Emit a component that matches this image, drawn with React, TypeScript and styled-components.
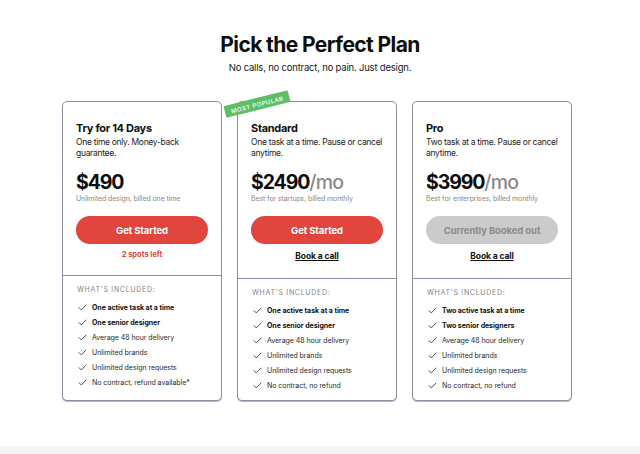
import { createGlobalStyle, styled } from "styled-components";

type Feature = { text: string; bold?: boolean };

type Plan = {
  title: string;
  desc: string;
  price: string;
  perMonth: boolean;
  note: string;
  cta: string;
  disabled: boolean;
  extra: "spots" | "call";
  extraText: string;
  popular: boolean;
  features: Feature[];
};

const plans: Plan[] = [
  {
    title: "Try for 14 Days",
    desc: "One time only. Money-back guarantee.",
    price: "$490",
    perMonth: false,
    note: "Unlimited design, billed one time",
    cta: "Get Started",
    disabled: false,
    extra: "spots",
    extraText: "2 spots left",
    popular: false,
    features: [
      { text: "One active task at a time", bold: true },
      { text: "One senior designer", bold: true },
      { text: "Average 48 hour delivery" },
      { text: "Unlimited brands" },
      { text: "Unlimited design requests" },
      { text: "No contract, refund available*" },
    ],
  },
  {
    title: "Standard",
    desc: "One task at a time. Pause or cancel anytime.",
    price: "$2490",
    perMonth: true,
    note: "Best for startups, billed monthly",
    cta: "Get Started",
    disabled: false,
    extra: "call",
    extraText: "Book a call",
    popular: true,
    features: [
      { text: "One active task at a time", bold: true },
      { text: "One senior designer", bold: true },
      { text: "Average 48 hour delivery" },
      { text: "Unlimited brands" },
      { text: "Unlimited design requests" },
      { text: "No contract, no refund" },
    ],
  },
  {
    title: "Pro",
    desc: "Two task at a time. Pause or cancel anytime.",
    price: "$3990",
    perMonth: true,
    note: "Best for enterprises, billed monthly",
    cta: "Currently Booked out",
    disabled: true,
    extra: "call",
    extraText: "Book a call",
    popular: false,
    features: [
      { text: "Two active task at a time", bold: true },
      { text: "Two senior designers", bold: true },
      { text: "Average 48 hour delivery" },
      { text: "Unlimited brands" },
      { text: "Unlimited design requests" },
      { text: "No contract, no refund" },
    ],
  },
];

function Check() {
  return (
    <CheckIcon viewBox="0 0 10 8" aria-hidden>
      <polyline points="1,4.2 3.6,6.8 9,1.2" />
    </CheckIcon>
  );
}

function PlanCard({ plan }: { plan: Plan }) {
  return (
    <Card>
      {plan.popular && (
        <Badge>
          <span>Most Popular</span>
        </Badge>
      )}
      <Top $tall={plan.extra === "call"}>
        <PlanTitle>{plan.title}</PlanTitle>
        <PlanDesc>{plan.desc}</PlanDesc>
        <Price>
          {plan.price}
          {plan.perMonth && <Per>/mo</Per>}
        </Price>
        <PriceNote>{plan.note}</PriceNote>
        <Cta $disabled={plan.disabled}>{plan.cta}</Cta>
        {plan.extra === "spots" ? (
          <Spots>{plan.extraText}</Spots>
        ) : (
          <BookLink href="#">{plan.extraText}</BookLink>
        )}
      </Top>
      <Bottom>
        <IncludedLabel>What's included:</IncludedLabel>
        <FeatureList>
          {plan.features.map((f) => (
            <FeatureRow key={f.text} $bold={f.bold}>
              <Check />
              {f.text}
            </FeatureRow>
          ))}
        </FeatureList>
      </Bottom>
    </Card>
  );
}

export default function App() {
  return (
    <>
      <GlobalStyle />
      <Page>
        <Header>
          <Title>Pick the Perfect Plan</Title>
          <Subtitle>No calls, no contract, no pain. Just design.</Subtitle>
        </Header>
        <Cards>
          {plans.map((p) => (
            <PlanCard key={p.title} plan={p} />
          ))}
        </Cards>
        <FooterBand />
      </Page>
    </>
  );
}

const GlobalStyle = createGlobalStyle`
  * { box-sizing: border-box; }
  html, body {
    margin: 0;
    padding: 0;
    background: #ffffff;
    overflow: hidden;
  }
  body {
    font-family: Inter, "Liberation Sans", sans-serif;
    color: #111111;
  }
`;

const Page = styled.div`
  height: 454px;
  display: flex;
  flex-direction: column;
  align-items: center;
`;

const Header = styled.header`
  padding-top: 33px;
  display: flex;
  flex-direction: column;
  align-items: center;
`;

const Title = styled.h1`
  margin: 0;
  font-size: 21px;
  line-height: 24px;
  font-weight: 700;
  letter-spacing: -0.6px;
  color: #0d0d0d;
`;

const Subtitle = styled.p`
  margin: 5px 0 0;
  font-size: 9.5px;
  line-height: 12px;
  letter-spacing: -0.2px;
  color: #1a1a1a;
`;

const Cards = styled.div`
  margin-top: 27px;
  margin-left: -6px;
  display: grid;
  grid-template-columns: repeat(3, 160px);
  column-gap: 15px;
`;

const Card = styled.div`
  position: relative;
  height: 300px;
  border: 1px solid #8f8da0;
  border-radius: 5px;
  box-shadow: 0 1px 0 #b8b6c4;
  display: flex;
  flex-direction: column;
  background: #fff;
`;

const Top = styled.div<{ $tall: boolean }>`
  padding: 18px 13px 0;
  height: ${({ $tall }) => ($tall ? "177px" : "174px")};
  display: flex;
  flex-direction: column;
  border-bottom: 1px solid #8f8da0;
`;

const PlanTitle = styled.h2`
  margin: 0;
  font-size: 11px;
  line-height: 16px;
  font-weight: 700;
  letter-spacing: -0.3px;
`;

const PlanDesc = styled.p`
  margin: 1px 0 0;
  font-size: 8.5px;
  line-height: 11px;
  color: #1c1c1c;
  letter-spacing: -0.3px;
`;

const Price = styled.div`
  margin-top: 12px;
  font-size: 19.5px;
  line-height: 22px;
  font-weight: 700;
  letter-spacing: -1.1px;
  color: #0d0d0d;
`;

const Per = styled.span`
  font-weight: 500;
  color: #8a8a8a;
  letter-spacing: -0.8px;
`;

const PriceNote = styled.div`
  margin-top: 1px;
  font-size: 7px;
  line-height: 9px;
  color: #8a8a8a;
  letter-spacing: -0.1px;
`;

const Cta = styled.button<{ $disabled: boolean }>`
  margin-top: 13px;
  height: 28px;
  width: 100%;
  border: none;
  border-radius: 14px;
  font-family: inherit;
  font-size: 9.5px;
  font-weight: 700;
  letter-spacing: -0.1px;
  cursor: ${({ $disabled }) => ($disabled ? "default" : "pointer")};
  background: ${({ $disabled }) => ($disabled ? "#cbcbcb" : "#e0463e")};
  color: ${({ $disabled }) => ($disabled ? "#8a8a8a" : "#ffffff")};
`;

const Spots = styled.div`
  margin-top: 6px;
  text-align: center;
  font-size: 7.5px;
  line-height: 10px;
  font-weight: 700;
  color: #e0463e;
`;

const BookLink = styled.a`
  margin-top: 7px;
  align-self: center;
  font-size: 8.5px;
  line-height: 11px;
  font-weight: 700;
  color: #111;
  text-decoration: underline;
  letter-spacing: -0.1px;
`;

const Bottom = styled.div`
  padding: 9px 14px 0;
`;

const IncludedLabel = styled.div`
  font-size: 7px;
  line-height: 10px;
  text-transform: uppercase;
  letter-spacing: 0.7px;
  color: #858585;
`;

const FeatureList = styled.ul`
  list-style: none;
  margin: 5px 0 0;
  padding: 0;
`;

const FeatureRow = styled.li<{ $bold?: boolean }>`
  display: flex;
  align-items: center;
  gap: 5px;
  height: 15px;
  font-size: 7px;
  font-weight: ${({ $bold }) => ($bold ? 700 : 400)};
  color: ${({ $bold }) => ($bold ? "#111" : "#2a2a2a")};
  letter-spacing: -0.05px;
`;

const CheckIcon = styled.svg`
  width: 9px;
  height: 7px;
  margin-left: 1px;
  flex-shrink: 0;
  fill: none;
  stroke: #222;
  stroke-width: 0.9;
  stroke-linecap: round;
  stroke-linejoin: round;
`;

const Badge = styled.div`
  position: absolute;
  left: -14px;
  top: -4px;
  width: 66px;
  height: 12px;
  background: #5cbf68;
  border-radius: 1px;
  transform: rotate(-14deg);
  display: flex;
  align-items: center;
  justify-content: center;

  span {
    font-size: 6px;
    font-weight: 500;
    letter-spacing: 0.5px;
    text-transform: uppercase;
    color: #fff;
    white-space: nowrap;
  }
`;

const FooterBand = styled.div`
  margin-top: auto;
  width: 100%;
  height: 8px;
  background: #f5f5f5;
`;
